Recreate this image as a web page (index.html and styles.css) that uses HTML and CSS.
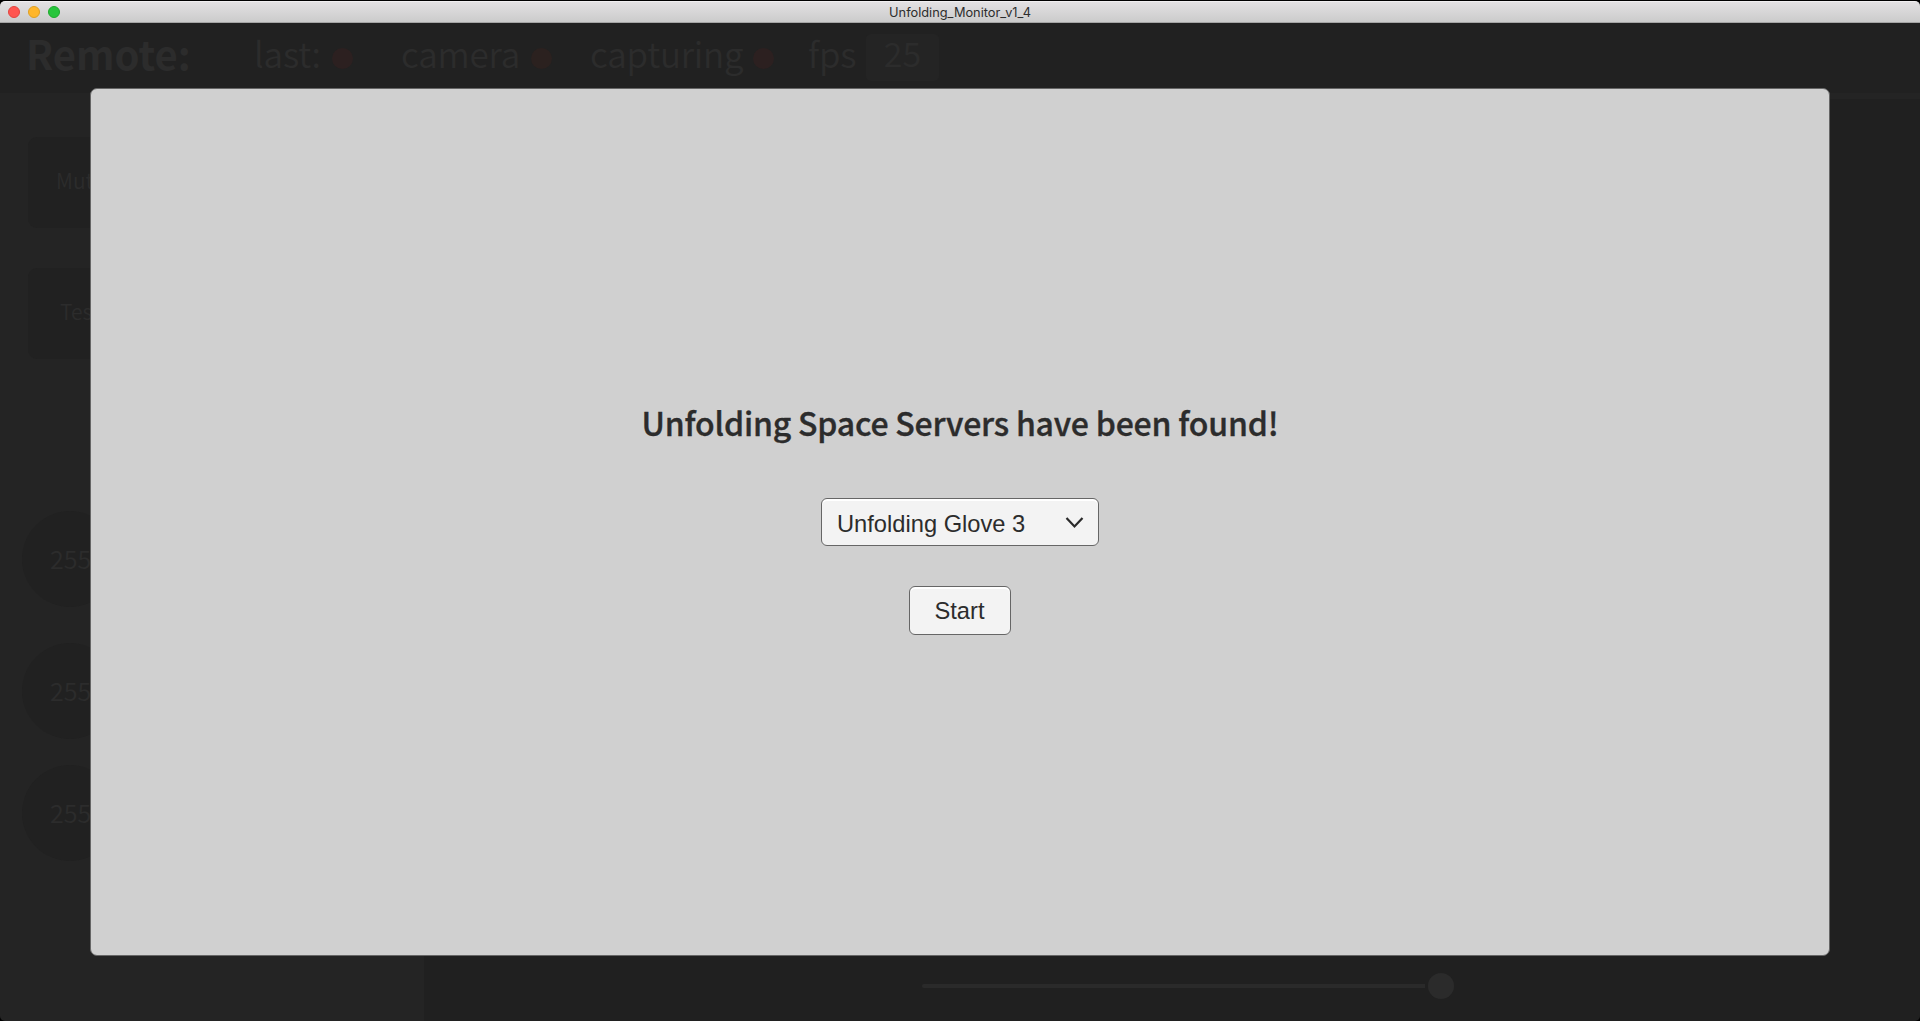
FILE: index.html
```html
<!DOCTYPE html>
<html lang="en">
<head>
<meta charset="utf-8">
<title>Unfolding_Monitor_v1_4</title>
<link rel="stylesheet" href="styles.css">
</head>
<body>
<div class="window">
  <div class="titlebar">
    <span class="light close"></span><span class="light minimize"></span><span class="light maximize"></span>
    <span class="title">Unfolding_Monitor_v1_4</span>
  </div>
  <header class="status">
    <span class="remote">Remote:</span>
    <span class="label last">last:</span><i class="dot"></i>
    <span class="label camera">camera</span><i class="dot warn"></i>
    <span class="label capturing">capturing</span><i class="dot"></i>
    <span class="label fps">fps</span>
    <span class="fps-value"><span class="num">25</span></span>
  </header>
  <div class="panes">
    <aside class="side">
      <div class="tile mute">Mut</div>
      <div class="tile test">Tes</div>
      <div class="motor">255</div>
      <div class="motor">255</div>
      <div class="motor">255</div>
    </aside>
    <main class="view">
      <div class="slider"><span class="track"></span><span class="knob"></span></div>
    </main>
  </div>
  <div class="modal">
    <h1 class="heading">Unfolding Space Servers have been found!</h1>
    <div class="control select">
      <span>Unfolding Glove 3</span>
      <svg class="chevron" width="19" height="13" viewBox="0 0 19 13"><path d="M1.5 2 L9.5 10.5 L17.5 2" fill="none" stroke="#2a2a2a" stroke-width="2.2"/></svg>
    </div>
    <button class="control start">Start</button>
  </div>
</div>
</body>
</html>
```
FILE: styles.css
```css
* { box-sizing: border-box; }
body { margin: 0; background: #000; font-family: "Noto Sans CJK SC", sans-serif; }
.window { position: relative; display: flex; flex-direction: column; width: 1920px; height: 1021px; padding-top: 1px; overflow: hidden; background: #000; color: #2c2c2c; }
.titlebar { display: flex; align-items: center; gap: 8px; height: 22px; padding-left: 8px; border-radius: 5px 5px 0 0; border-top: 1px solid #f1eff1; border-bottom: 1px solid #a5a5a5; background: linear-gradient(#e3e1e3, #cbcbcb); }
.light { width: 12px; height: 12px; border-radius: 50%; }
.close { background: #ff5550; border: 1px solid #e2453f; }
.minimize { background: #ffb62b; border: 1px solid #dfa023; }
.maximize { background: #27c53c; border: 1px solid #1daa2c; }
.title { flex: 1; margin-left: -68px; padding-top: 1px; text-align: center; font: 12.8px/18px Inter, sans-serif; color: #2d2d2d; }
.status { flex: none; display: flex; align-items: center; height: 70px; padding-left: 26px; background: #212121; white-space: nowrap; }
.remote { width: 228px; font-size: 40px; font-weight: 700; line-height: 60px; padding-bottom: 11px; }
.label { font-size: 35px; font-weight: 350; line-height: 60px; padding-bottom: 11px; letter-spacing: -.2px; }
.last { width: 78px; }
.camera { width: 130px; margin-left: 48px; }
.capturing { width: 163px; margin-left: 38px; }
.fps { width: 57px; margin-left: 34px; }
.dot { flex: none; width: 21px; height: 21px; border-radius: 50%; background: #2c2020; }
.warn { background: #2b211f; }
.fps-value { width: 73px; height: 47px; margin: -2px 0 0 1px; border-radius: 5px; background: #242424; text-align: center; font-size: 34px; font-weight: 350; line-height: 38px; }
.panes { flex: 1; display: grid; grid-template-columns: 424px 1fr; border-radius: 0 0 5px 5px; overflow: hidden; }
.side { padding: 44px 0 0 22px; background: #242424; }
.tile { width: 160px; height: 91px; margin: 0 0 40px 6px; border-radius: 9px; background: #212121; font-size: 21px; font-weight: 350; line-height: 86px; }
.mute { padding-left: 28px; }
.test { padding-left: 32px; margin-bottom: 152px; }
.motor { width: 96px; height: 96px; margin-bottom: 36px; border-radius: 50%; padding-left: 28px; background: #212121; font-size: 25px; font-weight: 350; line-height: 94px; }
.motor:nth-of-type(4) { margin-bottom: 26px; }
.view { display: flex; align-items: flex-end; padding: 0 0 22px 498px; border-top: 6px solid #242424; background: #202020; }
.slider { display: flex; align-items: center; gap: 3px; }
.track { width: 503px; height: 4px; border-radius: 2px 0 0 2px; background: #2a2a2a; }
.knob { width: 26px; height: 26px; border-radius: 50%; background: #2b2b2b; }
.modal { position: absolute; left: 90px; top: 88px; width: 1740px; height: 868px; display: flex; flex-direction: column; align-items: center; padding-top: 309px; border: 1px solid #666; border-radius: 7px; background: #d0d0d0; }
.heading { margin: 0 0 51px; font-size: 32px; font-weight: 500; letter-spacing: -.2px; -webkit-text-stroke: .35px #2c2c2c; line-height: 49px; white-space: nowrap; }
.control { border: 1px solid #666; border-radius: 6px; background: #f3f3f3; box-shadow: inset 0 2px 0 #fff; font: 23.7px/28px "Liberation Sans", sans-serif; color: #2c2c2c; }
.select { display: flex; align-items: center; justify-content: space-between; width: 278px; height: 48px; padding: 3px 14px 0 15px; margin-bottom: 40px; }
.chevron { margin-top: -2px; }
.start { width: 102px; height: 49px; padding: 0 1px 0 0; }
```
